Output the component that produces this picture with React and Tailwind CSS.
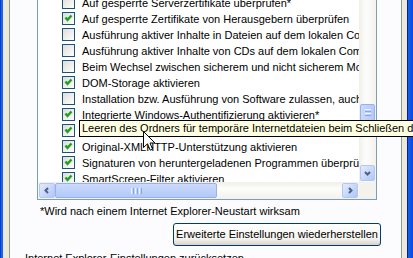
import React from "react";

const items = [
  ["Auf gesperrte Serverzertifikate überprüfen*", false],
  ["Auf gesperrte Zertifikate von Herausgebern überprüfen", true],
  ["Ausführung aktiver Inhalte in Dateien auf dem lokalen Computer zulassen*", false],
  ["Ausführung aktiver Inhalte von CDs auf dem lokalen Computer zulassen*", false],
  ["Beim Wechsel zwischen sicherem und nicht sicherem Modus warnen", false],
  ["DOM-Storage aktivieren", true],
  ["Installation bzw. Ausführung von Software zulassen, auch wenn die Signatur ungültig ist", false],
  ["Integrierte Windows-Authentifizierung aktivieren*", true],
  ["Leeren des Ordners für temporäre Internetdateien beim Schließen des Browsers", true],
  ["Original-XMLHTTP-Unterstützung aktivieren", true],
  ["Signaturen von heruntergeladenen Programmen überprüfen", true],
  ["SmartScreen-Filter aktivieren", true],
];

function Check({ checked }) {
  return (
    <div className="mt-[1px] w-[13px] h-[13px] shrink-0 border border-[#1c5180] bg-[linear-gradient(135deg,#dcdcd7,#ffffff)]">
      {checked && (
        <svg width="11" height="11" viewBox="0 0 11 11" className="block">
          <polyline points="2.5,4.5 4.5,6.8 8.5,2.5" fill="none" stroke="#21a121" strokeWidth="2.5" />
        </svg>
      )}
    </div>
  );
}

function Arrow({ dir }) {
  const pts = {
    left: "5,2 2.5,4.5 5,7",
    right: "3,2 5.5,4.5 3,7",
    down: "2,3 4.5,5.5 7,3",
  }[dir];
  return (
    <svg width="9" height="9" viewBox="0 0 9 9">
      <polyline points={pts} fill="none" stroke="#4d6185" strokeWidth="2" />
    </svg>
  );
}

function SBtn({ dir, cls }) {
  return (
    <div className={"flex items-center justify-center rounded-[2px] border border-[#b3c7f5] bg-[linear-gradient(135deg,#e3ebfd,#b0c6f8)] " + cls}>
      <Arrow dir={dir} />
    </div>
  );
}

export default function App() {
  return (
    <div className="relative w-[413px] h-[258px] overflow-hidden flex bg-[#ece9d8] text-black font-['Liberation_Sans',Arial,sans-serif] text-[11px]">
      {/* left frame */}
      <div className="w-[1px] bg-[#0a3bcf]" />
      <div className="w-[2px] bg-[#1d63ec]" />
      <div className="w-[6px] bg-[#ece9d8]" />
      {/* tab page */}
      <div className="w-[393px] shrink-0 border-x border-[#919b9c] bg-[#fcfcfe] flex flex-col">
        <div className="ml-[27px] w-[340px] h-[200px] shrink-0 border-x border-b border-[#7f9db9] grid grid-cols-[321px_17px] grid-rows-[182px_17px]">
          {/* content */}
          <div className="overflow-hidden bg-white">
            <div className="mt-[-5px]">
              {items.map(([t, c], i) => (
                <div key={i} className="flex items-start h-[16px] leading-[16px] whitespace-nowrap">
                  <div className="ml-[24px]">
                    <Check checked={c} />
                  </div>
                  <span className="ml-[7px]">{t}</span>
                </div>
              ))}
            </div>
          </div>
          {/* vertical scrollbar */}
          <div className="flex flex-col items-center bg-[linear-gradient(90deg,#f0efe9,#fdfdfb_40%,#f3f2ec)]">
            <div className="h-[104px] shrink-0" />
            <div className="w-[15px] h-[17px] shrink-0 rounded-[2px] border border-[#98b1ec] bg-[linear-gradient(90deg,#cbdafc,#b3c9f9)] flex flex-col items-center justify-center gap-[1px]">
              <div className="w-[6px] h-[1px] bg-[#eef3fe]" />
              <div className="w-[6px] h-[1px] bg-[#8ea6dc]" />
              <div className="w-[6px] h-[1px] bg-[#eef3fe]" />
              <div className="w-[6px] h-[1px] bg-[#8ea6dc]" />
            </div>
            <div className="flex-1" />
            <SBtn dir="down" cls="w-[15px] h-[16px] mb-[1px]" />
          </div>
          {/* horizontal scrollbar */}
          <div className="flex items-center bg-[linear-gradient(180deg,#f0efe9,#fdfdfb_40%,#f3f2ec)] px-[1px]">
            <SBtn dir="left" cls="w-[16px] h-[15px] shrink-0" />
            <div className="w-[162px] h-[15px] shrink-0 rounded-[2px] border border-[#98b1ec] bg-[linear-gradient(180deg,#cbdafc,#b3c9f9)] flex items-center justify-center gap-[1px]">
              <div className="w-[1px] h-[6px] bg-[#eef3fe]" />
              <div className="w-[1px] h-[6px] bg-[#8ea6dc]" />
              <div className="w-[1px] h-[6px] bg-[#eef3fe]" />
              <div className="w-[1px] h-[6px] bg-[#8ea6dc]" />
              <div className="w-[1px] h-[6px] bg-[#eef3fe]" />
              <div className="w-[1px] h-[6px] bg-[#8ea6dc]" />
            </div>
            <div className="flex-1" />
            <SBtn dir="right" cls="w-[16px] h-[15px] shrink-0" />
          </div>
          <div className="bg-[#f3f2ec]" />
        </div>

        <div className="ml-[30px] mt-[5px] h-[13px] leading-[13px] whitespace-nowrap">
          *Wird nach einem Internet Explorer-Neustart wirksam
        </div>

        <div className="ml-[163px] mt-[5px] w-[208px] h-[23px] shrink-0 rounded-[3px] border border-[#003c74] bg-[linear-gradient(180deg,#ffffff,#f4f3ee_70%,#d8d3c7)] flex items-center justify-center whitespace-nowrap">
          Erweiterte Einstellungen wiederherstellen
        </div>

        <div className="ml-[7px] mt-[6px] w-[361px] h-[13px] shrink-0 leading-[13px] flex items-center whitespace-nowrap">
          <div className="w-[6px] h-[1px] bg-[#d0d0bf]" />
          <span className="px-[2px]">Internet Explorer-Einstellungen zurücksetzen</span>
          <div className="flex-1 h-[1px] bg-[#d0d0bf] ml-[2px]" />
        </div>
      </div>
      {/* right frame */}
      <div className="w-[5px] bg-[#ece9d8]" />
      <div className="w-[1px] bg-[#00209f]" />
      <div className="w-[5px] bg-[linear-gradient(90deg,#1a5ff0,#0a48da)]" />

      {/* tooltip */}
      <div className="absolute left-[79px] top-[120px] h-[17px] border border-black bg-[#ffffe1] pl-[2px] pr-[4px] leading-[15px] whitespace-nowrap">
        Leeren des Ordners für temporäre Internetdateien beim Schließen des Browsers
      </div>

      {/* mouse cursor */}
      <svg className="absolute left-[143px] top-[131px]" width="13" height="21" viewBox="0 0 13 21">
        <path d="M0.5 0.5 V16.5 L4.5 12.8 L7.2 19.2 L9.6 18.2 L7 12 H12 Z" fill="#ffffff" stroke="#000000" strokeWidth="1" strokeLinejoin="miter" />
      </svg>
    </div>
  );
}
